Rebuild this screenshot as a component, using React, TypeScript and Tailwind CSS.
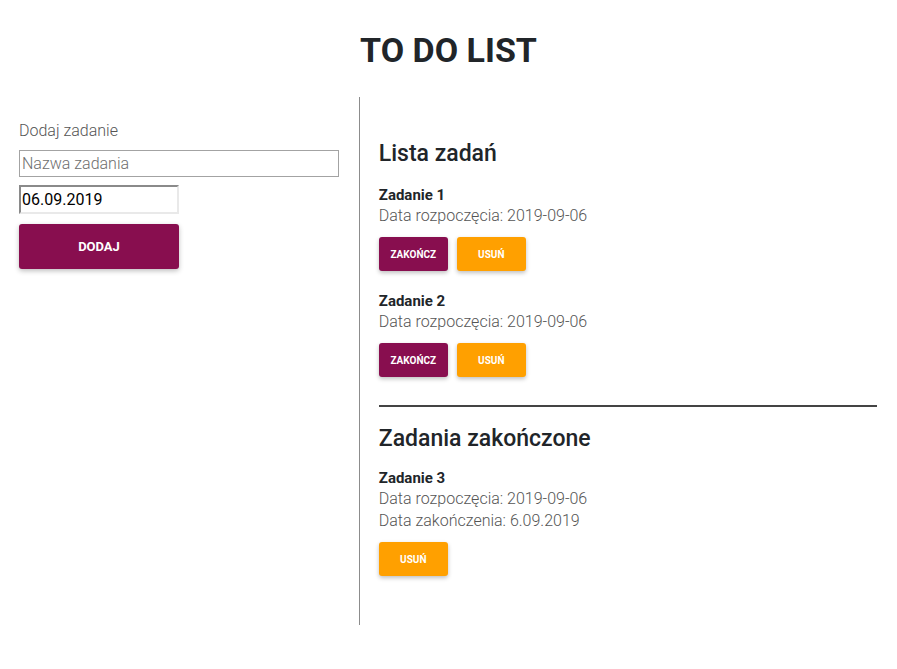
import { useState } from 'react';

type Task = {
  name: string;
  start: string;
  end?: string;
};

const btnBase =
  'h-[34px] w-[69px] rounded-[3px] text-[10px] font-bold uppercase text-white shadow-[0_2px_4px_rgba(0,0,0,0.25)]';

const TaskItem = ({ task, done }: { task: Task; done?: boolean }) => {
  return (
    <div className={done ? 'mt-5 first:mt-[15px]' : 'mt-5 first:mt-[17px]'}>
      <div className="text-[15px] font-bold leading-[20px] text-[#212529]">
        {task.name}
      </div>
      <div className="text-[16px] font-light leading-[22px] text-[#555]">
        Data rozpoczęcia: {task.start}
      </div>
      {done ? (
        <div className="text-[16px] font-light leading-[22px] text-[#555]">
          Data zakończenia: {task.end}
        </div>
      ) : null}
      <div className="mt-[10px] flex gap-[9px]">
        {!done ? (
          <button className={`${btnBase} bg-[#880e4f]`}>Zakończ</button>
        ) : null}
        <button className={`${btnBase} bg-[#ffa000]`}>Usuń</button>
      </div>
    </div>
  );
};

const App = () => {
  const [name, setName] = useState('');
  const [date, setDate] = useState('06.09.2019');

  const todo: Task[] = [
    { name: 'Zadanie 1', start: '2019-09-06' },
    { name: 'Zadanie 2', start: '2019-09-06' },
  ];
  const finished: Task[] = [
    { name: 'Zadanie 3', start: '2019-09-06', end: '6.09.2019' },
  ];

  return (
    <div className="min-h-screen bg-white font-['Roboto',sans-serif] text-[#212529]">
      <h1 className="pt-[30px] text-center text-[34px] font-bold leading-[40px]">
        TO DO LIST
      </h1>

      <div className="mt-[27px] flex">
        <div className="w-[40%] pl-[19px] pr-5 pt-[22px]">
          <div className="text-[16px] font-light leading-6 text-[#555]">
            Dodaj zadanie
          </div>
          <input
            type="text"
            value={name}
            onChange={(e) => setName(e.target.value)}
            placeholder="Nazwa zadania"
            className="mt-[7px] block h-[27px] w-[320px] border border-[#a3a3a3] px-[2px] text-[16px] font-light text-black outline-none placeholder:text-[#6e6e6e]"
          />
          <input
            type="text"
            value={date}
            onChange={(e) => setDate(e.target.value)}
            className="mt-2 block h-[29px] w-[160px] border-2 border-b-[#e9e9e9] border-l-[#8a8a8a] border-r-[#e9e9e9] border-t-[#8a8a8a] px-[1px] text-[16px] text-black outline-none"
          />
          <button className="mt-[10px] h-[45px] w-[160px] rounded-[3px] bg-[#880e4f] text-[13px] font-bold text-white shadow-[0_2px_5px_rgba(0,0,0,0.25)]">
            DODAJ
          </button>
        </div>

        <div className="w-[60%] border-l border-[#8c8c8c] pb-[49px] pl-[19px] pr-5 pt-[42px]">
          <h2 className="text-[23px] font-medium leading-[29px]">Lista zadań</h2>
          <div>
            {todo.map((t) => (
              <TaskItem key={t.name} task={t} />
            ))}
          </div>

          <hr className="mt-[28px] border-t-2 border-[#444]" />

          <h2 className="mt-[17px] text-[23px] font-medium leading-[29px]">
            Zadania zakończone
          </h2>
          <div>
            {finished.map((t) => (
              <TaskItem key={t.name} task={t} done />
            ))}
          </div>
        </div>
      </div>
    </div>
  );
};

export default App;
